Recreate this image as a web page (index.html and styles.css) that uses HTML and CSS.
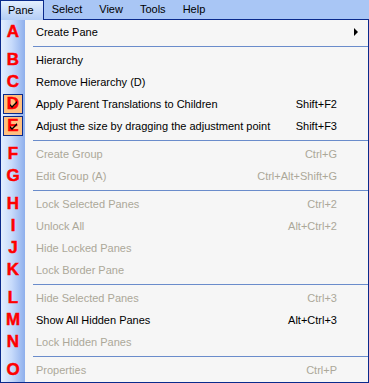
FILE: index.html
```html
<!DOCTYPE html>
<html lang="en">
<head>
  <meta charset="UTF-8">
  <title>Pane Menu</title>
  <link rel="stylesheet" href="styles.css">
</head>
<body>
  <div class="menubar">
    <div class="bar-item open">Pane</div>
    <div class="bar-item">Select</div>
    <div class="bar-item">View</div>
    <div class="bar-item">Tools</div>
    <div class="bar-item">Help</div>
  </div>

  <div class="menu">
    <div class="row">
      <span class="tag">A</span>
      <span class="label">Create Pane</span>
      <span class="keys"></span>
      <span class="tail"><span class="arrow"></span></span>
    </div>
    <div class="sep"></div>
    <div class="row">
      <span class="tag">B</span>
      <span class="label">Hierarchy</span>
      <span class="keys"></span>
      <span class="tail"></span>
    </div>
    <div class="row">
      <span class="tag">C</span>
      <span class="label">Remove Hierarchy (D)</span>
      <span class="keys"></span>
      <span class="tail"></span>
    </div>
    <div class="row">
      <span class="tag checked">D<svg class="tick" width="7" height="7" viewBox="0 0 7 7"><path d="M0 3 L0 5 L2 7 L7 2 L7 0 L2 5 Z" fill="#000"/></svg></span>
      <span class="label">Apply Parent Translations to Children</span>
      <span class="keys">Shift+F2</span>
      <span class="tail"></span>
    </div>
    <div class="row">
      <span class="tag checked">E<svg class="tick" width="7" height="7" viewBox="0 0 7 7"><path d="M0 3 L0 5 L2 7 L7 2 L7 0 L2 5 Z" fill="#000"/></svg></span>
      <span class="label">Adjust the size by dragging the adjustment point</span>
      <span class="keys">Shift+F3</span>
      <span class="tail"></span>
    </div>
    <div class="sep"></div>
    <div class="row disabled">
      <span class="tag">F</span>
      <span class="label">Create Group</span>
      <span class="keys">Ctrl+G</span>
      <span class="tail"></span>
    </div>
    <div class="row disabled">
      <span class="tag">G</span>
      <span class="label">Edit Group (A)</span>
      <span class="keys">Ctrl+Alt+Shift+G</span>
      <span class="tail"></span>
    </div>
    <div class="sep"></div>
    <div class="row disabled">
      <span class="tag">H</span>
      <span class="label">Lock Selected Panes</span>
      <span class="keys">Ctrl+2</span>
      <span class="tail"></span>
    </div>
    <div class="row disabled">
      <span class="tag">I</span>
      <span class="label">Unlock All</span>
      <span class="keys">Alt+Ctrl+2</span>
      <span class="tail"></span>
    </div>
    <div class="row disabled">
      <span class="tag">J</span>
      <span class="label">Hide Locked Panes</span>
      <span class="keys"></span>
      <span class="tail"></span>
    </div>
    <div class="row disabled">
      <span class="tag">K</span>
      <span class="label">Lock Border Pane</span>
      <span class="keys"></span>
      <span class="tail"></span>
    </div>
    <div class="sep"></div>
    <div class="row disabled">
      <span class="tag">L</span>
      <span class="label">Hide Selected Panes</span>
      <span class="keys">Ctrl+3</span>
      <span class="tail"></span>
    </div>
    <div class="row">
      <span class="tag">M</span>
      <span class="label">Show All Hidden Panes</span>
      <span class="keys">Alt+Ctrl+3</span>
      <span class="tail"></span>
    </div>
    <div class="row disabled">
      <span class="tag">N</span>
      <span class="label">Lock Hidden Panes</span>
      <span class="keys"></span>
      <span class="tail"></span>
    </div>
    <div class="sep"></div>
    <div class="row disabled">
      <span class="tag">O</span>
      <span class="label">Properties</span>
      <span class="keys">Ctrl+P</span>
      <span class="tail"></span>
    </div>
  </div>
</body>
</html>
```

FILE: styles.css
```css
* {
    margin: 0;
    padding: 0;
    box-sizing: border-box;
}

body {
    width: 369px;
    height: 383px;
    overflow: hidden;
    background: #a9c6f5;
    color: #000;
    font-family: 'Liberation Sans', Arial, sans-serif;
    font-size: 11px;
}

.menubar {
    display: flex;
    height: 19px;
    background: #a9c6f5;
}

.bar-item {
    padding: 0 9px 0 8px;
    line-height: 19px;
}

.bar-item.open {
    height: 20px;
    padding: 0 9px 0 7px;
    border: 1px solid #0a2a8c;
    border-bottom: none;
    line-height: 18px;
    background: linear-gradient(to bottom, #e3effe, #b4cdf6);
    position: relative;
    z-index: 2;
}

.menu {
    height: 364px;
    border: 1px solid #0a2a8c;
    padding-top: 1px;
    background: linear-gradient(to right, #e3effe 0%, #c6dafb 45%, #8eafec 100%) 0 0 / 24px 100% no-repeat, #f6f6f6;
}

.row {
    display: grid;
    grid-template-columns: 24px 1fr auto 31px;
    align-items: center;
    height: 22px;
}

.row.disabled {
    color: #aca899;
}

.tag {
    position: relative;
    display: flex;
    align-items: center;
    justify-content: center;
    height: 22px;
    color: #ff0000;
    font-size: 17px;
    font-weight: bold;
    -webkit-text-stroke: 0.5px #ff0000;
}

.tag.checked {
    width: 20px;
    height: 20px;
    margin-left: 2px;
    border: 1px solid #0a2a8c;
    background: #ffc080;
}

.tick {
    position: absolute;
    left: 6px;
    top: 6px;
}

.label {
    padding-left: 11px;
    white-space: nowrap;
}

.keys {
    white-space: nowrap;
    text-align: right;
}

.tail {
    display: flex;
    align-items: center;
    height: 22px;
}

.arrow {
    margin-left: 17px;
    width: 0;
    height: 0;
    border-top: 4px solid transparent;
    border-bottom: 4px solid transparent;
    border-left: 4px solid #000;
}

.sep {
    height: 6px;
    padding-top: 3px;
    margin-left: 32px;
}

.sep::before {
    content: '';
    display: block;
    height: 1px;
    background: #6a8ccb;
}
```
